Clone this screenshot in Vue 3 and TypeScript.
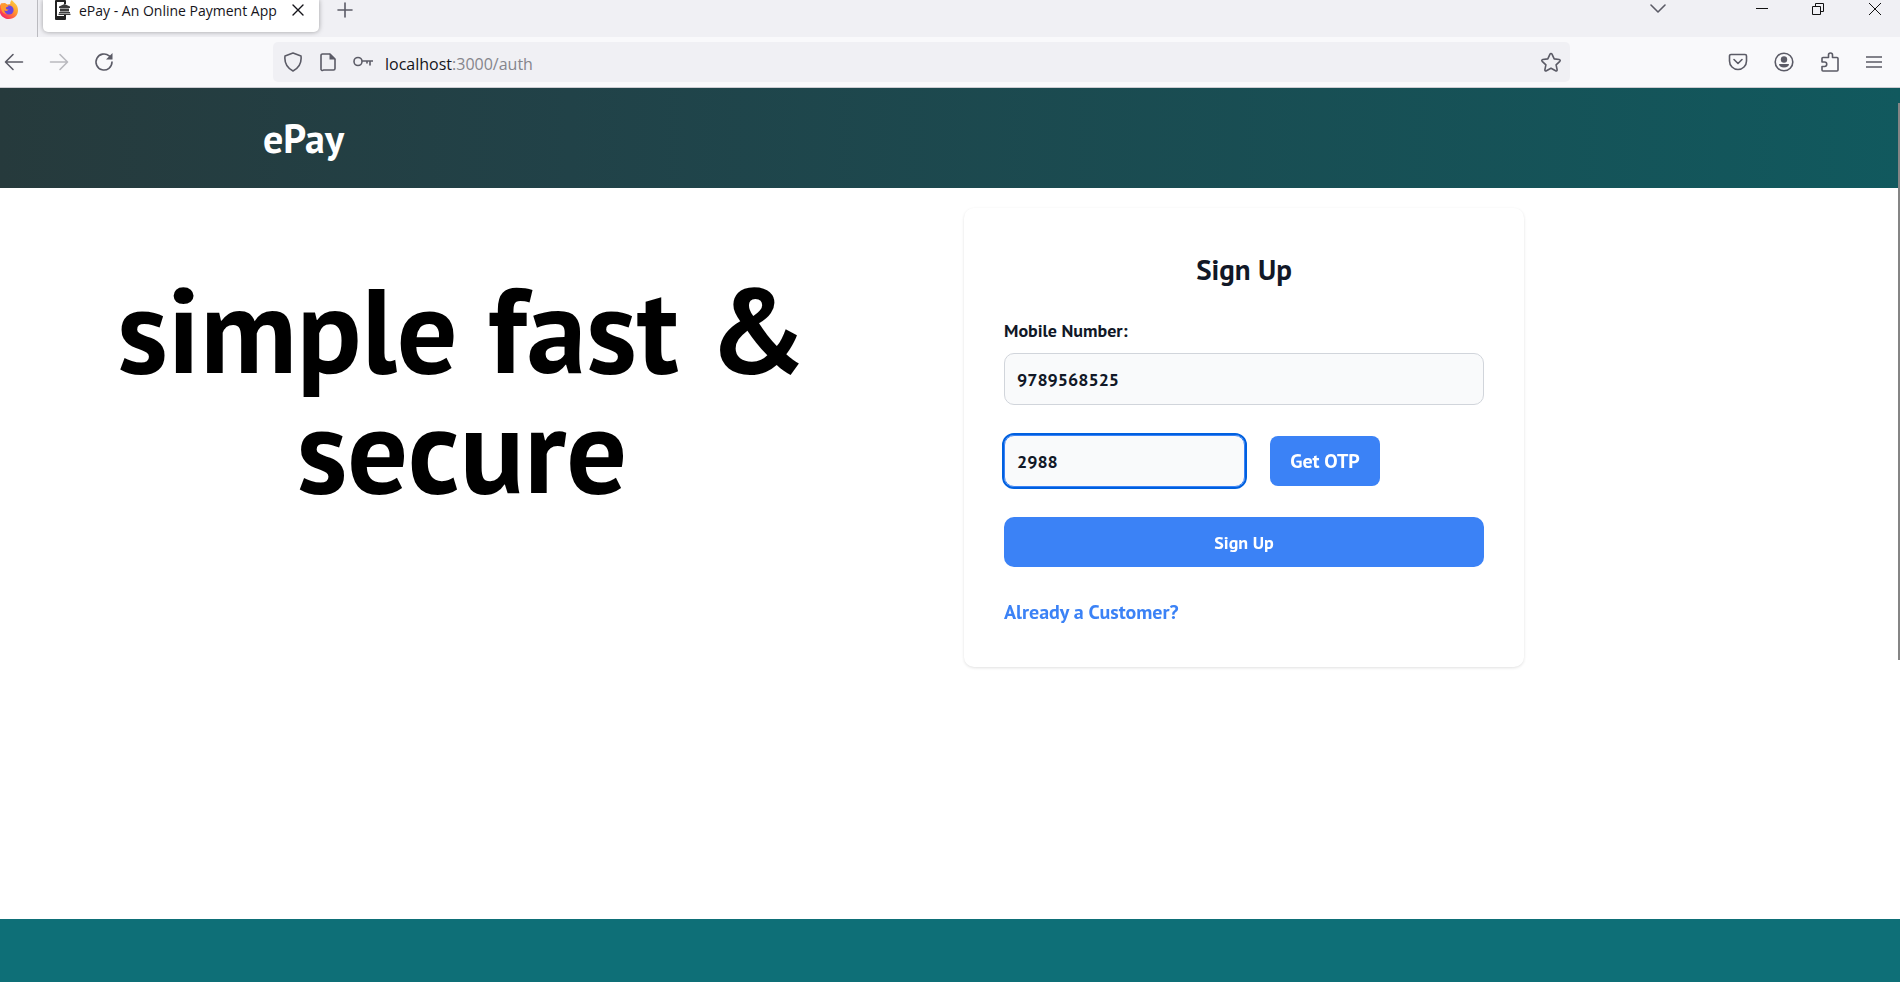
<script setup lang="ts">
import { ref, onMounted } from 'vue'

const mobile = ref('9789568525')
const otp = ref('2988')
const otpInput = ref<HTMLInputElement | null>(null)

onMounted(() => otpInput.value?.focus())
</script>

<template>
  <div class="window">
    <header class="tabs">
      <div class="pinned">
        <svg class="firefox" viewBox="0 0 20 20" aria-hidden="true">
          <defs>
            <linearGradient id="flame" x1="1" y1="0" x2="0.2" y2="1">
              <stop offset="0" stop-color="#ffe14a" />
              <stop offset="0.45" stop-color="#ff9a2e" />
              <stop offset="0.8" stop-color="#ff4a4f" />
              <stop offset="1" stop-color="#e81a6d" />
            </linearGradient>
          </defs>
          <path d="M10 19c5.400 0 9-3.900 9-8.800 0-3.200-1.400-5.600-3.100-6.900C15 2 13.400 1.200 12.800 0c-1.400 1.300-1.700 2.700-1.500 4l-3 .6L6 3 2 3.500.5 7v3c0 5 4.200 9 9.500 9z" fill="url(#flame)" />
          <circle cx="10" cy="10" r="4.600" fill="#6a45e0" />
          <path d="M2 4c3-.5 6 .5 7.500 2.600-2 .2-2.800 1-2.600 2 .3 1 1.700 1 2.800 1-1 1.700-3.700 1.600-4.700.4 0 2 1.500 3.600 3.500 4C3 14 1 9 2 4z" fill="#ff9a2e" />
        </svg>
      </div>
      <div class="tab">
        <svg class="favicon" viewBox="0 0 16 20" aria-hidden="true">
          <path d="M0 1a1 1 0 0 1 1-1h9a1 1 0 0 1 1 1v3H9V2H2v14h7v-1h2v4a1 1 0 0 1-1 1H1a1 1 0 0 1-1-1z" fill="#222" />
          <path d="M9.500 4L15 6.500V8H4V6.500zM5 8.500h9v3H5zM4 12h11v1.200H4zM3.500 13.800h12V15h-12z" fill="#3c3c3c" />
        </svg>
        <span class="tab-title">ePay - An Online Payment App</span>
        <button class="icon" aria-label="Close tab">
          <svg width="12" height="12" viewBox="0 0 12 12"><path d="M1 1l10 10M11 1L1 11" /></svg>
        </button>
      </div>
      <button class="icon new-tab" aria-label="New tab">
        <svg width="16" height="16" viewBox="0 0 16 16"><path d="M8 1v14M1 8h14" /></svg>
      </button>
      <div class="window-buttons">
        <button class="icon list" aria-label="List all tabs">
          <svg width="16" height="16" viewBox="0 0 16 16"><path d="M1 4l7 7 7-7" /></svg>
        </button>
        <button class="icon dark" aria-label="Minimize">
          <svg width="12" height="12" viewBox="0 0 12 12"><path d="M0 5.500h12" /></svg>
        </button>
        <button class="icon dark" aria-label="Restore">
          <svg width="12" height="12" viewBox="0 0 12 12"><path d="M.5 3.500h8v8h-8zM3.500 3.500v-3h8v8h-3" /></svg>
        </button>
        <button class="icon dark" aria-label="Close window">
          <svg width="14" height="14" viewBox="0 0 14 14"><path d="M1 1l12 12M13 1L1 13" /></svg>
        </button>
      </div>
    </header>

    <nav class="toolbar" aria-label="Browser">
      <div class="nav-buttons">
        <button class="icon" aria-label="Back">
          <svg width="20" height="20" viewBox="0 0 20 20"><path d="M18.500 10H2M9 2.500L1.500 10 9 17.500" /></svg>
        </button>
        <button class="icon" aria-label="Forward" disabled>
          <svg width="20" height="20" viewBox="0 0 20 20"><path d="M1.500 10H18M11 2.500l7.500 7.500-7.500 7.500" /></svg>
        </button>
        <button class="icon" aria-label="Reload">
          <svg width="20" height="20" viewBox="0 0 20 20">
            <path d="M18 10a8 8 0 1 1-2.800-6.100L17 5.500" />
            <path class="solid" d="M18.500 1v6.500H12z" />
          </svg>
        </button>
      </div>
      <div class="address">
        <svg width="20" height="20" viewBox="0 0 20 20" aria-hidden="true"><path d="M10 1l8 3c.7 6-1.200 11.500-8 15C3.200 15.500 1.300 10 2 4z" /></svg>
        <svg width="20" height="20" viewBox="0 0 20 20" aria-hidden="true">
          <path d="M5 2h7l5 5v9.500a1.500 1.500 0 0 1-1.500 1.500h-10A1.500 1.500 0 0 1 3 16.500v-13A1.500 1.500 0 0 1 4.500 2z" />
          <path class="solid" d="M11.500 1.500L17.500 7.500h-6z" />
        </svg>
        <svg width="20" height="20" viewBox="0 0 20 20" aria-hidden="true"><path d="M9 9.500a4 4 0 1 1-8 0 4 4 0 0 1 8 0zM9 9h10.500M17 9v4M14 9v2" /></svg>
        <span class="url"><b>localhost</b>:3000/auth</span>
        <button class="icon" aria-label="Bookmark this page">
          <svg width="22" height="20" viewBox="0 0 22 20"><path d="M11 1.500c.5 0 .8.300 1 .7l2.200 4.700 5 .6c1 .2 1.300 1.100.6 1.800l-3.700 3.500 1 4.900c.1 1-.7 1.500-1.500 1.100L11 16.300l-4.600 2.500c-.8.400-1.600-.1-1.500-1.100l1-4.900-3.700-3.500c-.7-.7-.4-1.600.6-1.800l5-.6L10 2.200c.2-.4.500-.7 1-.7z" /></svg>
        </button>
      </div>
      <div class="tools">
        <button class="icon" aria-label="Save to Pocket">
          <svg width="20" height="20" viewBox="0 0 20 20"><path d="M3 2.500h14a1.500 1.500 0 0 1 1.500 1.500v5a8.500 8.500 0 0 1-17 0V4A1.500 1.500 0 0 1 3 2.500zM6 7.500l4 4 4-4" /></svg>
        </button>
        <button class="icon" aria-label="Account">
          <svg width="20" height="20" viewBox="0 0 20 20">
            <circle cx="10" cy="10" r="8.800" />
            <circle class="solid" cx="10" cy="7.500" r="3.200" />
            <path class="solid" d="M5 12h10c0 2-2 3.500-5 3.500S5 14 5 12z" />
          </svg>
        </button>
        <button class="icon" aria-label="Extensions">
          <svg width="20" height="22" viewBox="0 0 20 22"><path d="M3 6.500h5.500V4a2 2 0 0 1 4 0v2.500H17a1 1 0 0 1 1 1V19a1 1 0 0 1-1 1H3a1 1 0 0 1-1-1v-3.500h2.500a2 2 0 0 0 0-4.500H2V7.500a1 1 0 0 1 1-1z" /></svg>
        </button>
        <button class="icon" aria-label="Menu">
          <svg width="16" height="16" viewBox="0 0 16 16"><path d="M.5 3h15M.5 8h15M.5 13h15" /></svg>
        </button>
      </div>
    </nav>

    <div class="page">
      <header class="banner"><a class="brand" href="#">ePay</a></header>
      <main class="content">
        <h1>simple fast &amp; secure</h1>
        <form class="card" @submit.prevent>
          <h2>Sign Up</h2>
          <label for="mobile">Mobile Number:</label>
          <input id="mobile" v-model="mobile" type="text" inputmode="numeric" />
          <div class="otp-row">
            <input ref="otpInput" v-model="otp" class="otp" type="text" inputmode="numeric" aria-label="OTP" />
            <button class="get-otp" type="button">Get OTP</button>
          </div>
          <button class="submit" type="submit">Sign Up</button>
          <a class="switch" href="#">Already a Customer?</a>
        </form>
      </main>
      <footer class="footer"></footer>
      <div class="scroll-thumb"></div>
    </div>
  </div>
</template>

<style>
body {
  margin: 0;
  overflow: hidden;
}
</style>

<style scoped>
* {
  box-sizing: border-box;
}

.window {
  display: flex;
  flex-direction: column;
  min-height: 100vh;
  background: #fff;
  font-family: "Open Sans", sans-serif;
}

svg {
  flex: none;
  display: block;
  fill: none;
  stroke: #5b5b66;
  stroke-width: 1.6;
  stroke-linecap: round;
  stroke-linejoin: round;
}

.firefox,
.favicon {
  stroke: none;
}

.solid {
  fill: #5b5b66;
  stroke: none;
}

.icon {
  display: flex;
  padding: 0;
  border: 0;
  background: none;
}

.icon:disabled {
  opacity: 0.4;
}

.tabs {
  display: flex;
  height: 37px;
  background: #f0f0f4;
}

.pinned {
  width: 38px;
  border-right: 1px solid #bbbbc0;
}

.firefox {
  width: 20px;
  height: 20px;
  margin-left: -1px;
}

.tab {
  display: flex;
  align-items: center;
  width: 276px;
  height: 32px;
  margin-left: 5px;
  padding: 0 15px 12px 12px;
  border-radius: 0 0 5px 5px;
  background: #fff;
  box-shadow: 0 0 5px rgba(0, 0, 0, 0.35);
}

.favicon {
  width: 16px;
  height: 20px;
}

.tab-title {
  flex: 1;
  margin-left: 8px;
  padding-top: 2px;
  color: #15141a;
  font-size: 14px;
  line-height: 20px;
  white-space: nowrap;
}

.tab .icon path {
  stroke: #15141a;
  stroke-width: 1.4;
}

.new-tab {
  height: 20px;
  margin-left: 18px;
  padding-top: 2px;
}

.window-buttons {
  display: flex;
  align-items: center;
  gap: 44px;
  height: 18px;
  margin-left: auto;
  padding-right: 18px;
}

.list {
  margin-right: 46px;
}

.dark svg {
  stroke: #111;
  stroke-width: 1;
  stroke-linecap: butt;
  stroke-linejoin: miter;
}

.toolbar {
  display: flex;
  align-items: center;
  height: 51px;
  border-bottom: 1px solid #ccccd1;
  background: #f9f9fb;
}

.nav-buttons {
  display: flex;
  gap: 25px;
  width: 273px;
  padding-left: 4px;
}

.address {
  display: flex;
  flex: 1;
  align-items: center;
  gap: 15px;
  height: 40px;
  padding: 0 8px 0 10px;
  border-radius: 5px;
  background: #f0f0f4;
}

.url {
  flex: 1;
  margin-left: -3px;
  padding-top: 3px;
  color: #85858c;
  font-size: 16px;
  line-height: 24px;
}

.url b {
  color: #15141a;
  font-weight: 400;
}

.tools {
  display: flex;
  align-items: center;
  justify-content: flex-end;
  gap: 26px;
  width: 330px;
  padding-right: 18px;
}

.page {
  position: relative;
  display: flex;
  flex: 1;
  flex-direction: column;
  font-family: "PT Sans", Lato, "Open Sans", sans-serif;
  font-weight: 700;
}

.banner {
  display: flex;
  align-items: center;
  height: 100px;
  padding-left: 263px;
  background: linear-gradient(90deg, #263a3c, #214248 30%, #11595e);
}

.brand {
  color: #fff;
  font-size: 40px;
  line-height: 48px;
  text-decoration: none;
}

.content {
  display: grid;
  flex: 1;
  grid-template-columns: minmax(0, 924fr) 560px minmax(0, 336fr);
  align-items: start;
  column-gap: 40px;
  padding-top: 20px;
}

h1 {
  margin: 0;
  padding: 61px 100px 0;
  color: #000;
  font-size: 120px;
  line-height: 120px;
  text-align: center;
}

.card {
  display: flex;
  flex-direction: column;
  align-items: stretch;
  padding: 40px;
  border-radius: 10px;
  background: #fff;
  color: #111827;
  box-shadow: 0 1px 3px rgba(0, 0, 0, 0.12);
}

h2 {
  margin: 0 0 25px;
  font-size: 29px;
  line-height: 43px;
  text-align: center;
}

label {
  margin-bottom: 8px;
  font-size: 18px;
  line-height: 29px;
}

input {
  height: 52px;
  padding: 0 12px;
  border: 1px solid #d1d5db;
  border-radius: 10px;
  background: #f9fafb;
  color: #111827;
  font: inherit;
  font-size: 18px;
}

input:focus {
  border-color: #3b82f6;
  outline: 2px solid #0060df;
}

.otp-row {
  display: flex;
  align-items: center;
  gap: 25px;
  margin: 30px 0;
}

.otp {
  width: 241px;
}

.get-otp,
.submit {
  height: 50px;
  border: 0;
  border-radius: 8px;
  background: #3b82f6;
  color: #fff;
  font: inherit;
  font-size: 20px;
}

.get-otp {
  width: 110px;
  padding: 0;
}

.submit {
  border-radius: 10px;
  font-size: 18px;
}

.switch {
  align-self: flex-start;
  margin-top: 30px;
  color: #3b82f6;
  font-size: 20px;
  line-height: 30px;
  text-decoration: none;
}

.footer {
  height: 63px;
  background: #0e6f77;
}

.scroll-thumb {
  position: absolute;
  top: 15px;
  right: 0;
  width: 2px;
  height: 557px;
  background: #858585;
}
</style>
